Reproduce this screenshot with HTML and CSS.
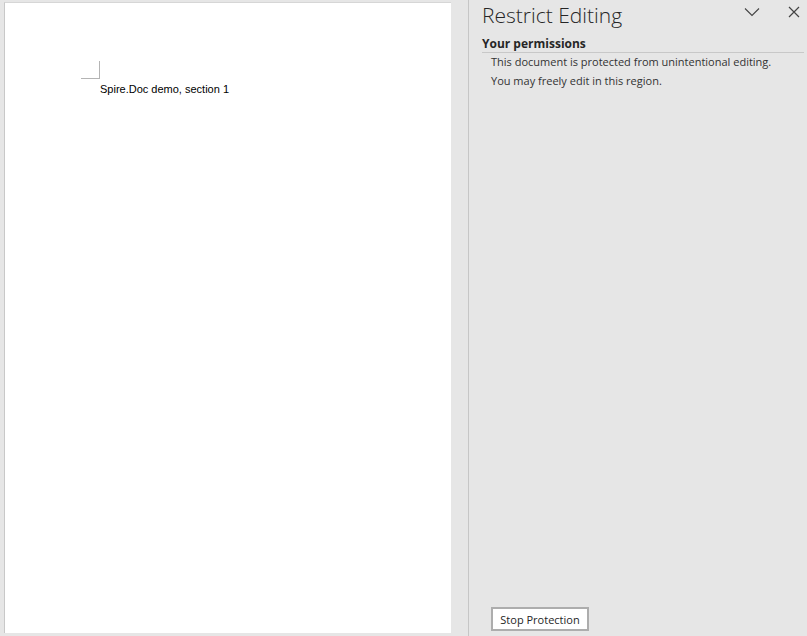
FILE: index.html
```html
<!DOCTYPE html>
<html lang="en">

<head>
  <meta charset="UTF-8" />
  <meta name="viewport" content="width=device-width, initial-scale=1.0" />
  <title>Restrict Editing</title>
  <link rel="stylesheet" href="styles.css">
</head>

<body>
  <div class="app">
    <div class="doc-area">
      <div class="page">
        <div class="margin-mark"></div>
        <p class="doc-text">Spire.Doc demo, section 1</p>
      </div>
    </div>

    <div class="pane">
      <div class="pane-head">
        <h2>Restrict Editing</h2>
        <div class="pane-tools">
          <svg width="16" height="10" viewBox="0 0 16 10"><path d="M1 1.5 L8 8.5 L15 1.5" fill="none" stroke="#444" stroke-width="1.1" /></svg>
          <svg width="12" height="12" viewBox="0 0 12 12"><path d="M1 1 L11 11 M11 1 L1 11" fill="none" stroke="#444" stroke-width="1.2" /></svg>
        </div>
      </div>
      <div class="section">
        <h3>Your permissions</h3>
        <p>This document is protected from unintentional editing.</p>
        <p>You may freely edit in this region.</p>
      </div>
      <div class="pane-foot">
        <button class="btn">Stop Protection</button>
      </div>
    </div>
  </div>
</body>

</html>
```

FILE: styles.css
```css
* {
  margin: 0;
  padding: 0;
  box-sizing: border-box;
}

body {
  background: #e6e6e6;
  font-family: "Open Sans", "Noto Sans", sans-serif;
  color: #333;
}

.app {
  display: flex;
  width: 807px;
  height: 636px;
}

.doc-area {
  width: 469px;
  padding: 2px 0 3px 4px;
  border-right: 1px solid #c6c6c6;
}

.page {
  width: 447px;
  height: 631px;
  background: #fff;
  border-left: 1px solid #c8c8c8;
  border-top: 1px solid #d6d6d6;
  padding: 58px 0 0 76px;
}

.margin-mark {
  width: 19px;
  height: 18px;
  border-right: 1px solid #b4b4b4;
  border-bottom: 1px solid #b4b4b4;
}

.doc-text {
  font-family: "Liberation Sans", Arial, sans-serif;
  font-size: 11px;
  color: #000;
  margin: 4px 0 0 19px;
}

.pane {
  flex: 1;
  display: flex;
  flex-direction: column;
  padding: 0 3px 5px 13px;
}

.pane-head {
  display: flex;
  justify-content: space-between;
  align-items: flex-start;
  height: 36px;
}

.pane-head h2 {
  font-size: 21px;
  font-weight: 300;
  color: #262626;
  line-height: 30px;
}

.pane-tools {
  display: flex;
  gap: 28px;
  align-items: center;
  padding: 6px 4px 0 0;
}

.section h3 {
  font-size: 12px;
  font-weight: 700;
  color: #262626;
  line-height: 16px;
  border-bottom: 1px solid #c8c8c8;
}

.section p {
  font-size: 11px;
  color: #333;
  line-height: 19px;
  padding-left: 9px;
}

.section h3 + p {
  margin-top: -1px;
}

.pane-foot {
  margin-top: auto;
  padding-left: 9px;
}

.btn {
  font-family: inherit;
  font-size: 11px;
  color: #262626;
  background: #fff;
  border: 2px solid #adadad;
  width: 98px;
  height: 24px;
}
```
